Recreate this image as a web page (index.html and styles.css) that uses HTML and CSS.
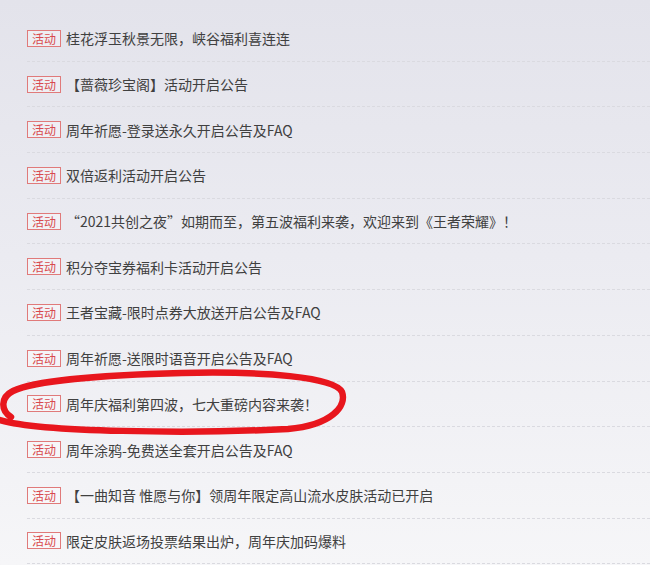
FILE: index.html
```html
<!DOCTYPE html>
<html lang="zh-CN">
<head>
<meta charset="utf-8">
<title>活动公告</title>
<link rel="stylesheet" href="styles.css">
</head>
<body>
<div class="page">
  <ul class="news">
    <li class="item"><span class="tag">活动</span><span class="title">桂花浮玉秋景无限，峡谷福利喜连连</span></li>
    <li class="item"><span class="tag">活动</span><span class="title">【蔷薇珍宝阁】活动开启公告</span></li>
    <li class="item"><span class="tag">活动</span><span class="title">周年祈愿-登录送永久开启公告及FAQ</span></li>
    <li class="item"><span class="tag">活动</span><span class="title">双倍返利活动开启公告</span></li>
    <li class="item"><span class="tag">活动</span><span class="title">“2021共创之夜”如期而至，第五波福利来袭，欢迎来到《王者荣耀》！</span></li>
    <li class="item"><span class="tag">活动</span><span class="title">积分夺宝券福利卡活动开启公告</span></li>
    <li class="item"><span class="tag">活动</span><span class="title">王者宝藏-限时点券大放送开启公告及FAQ</span></li>
    <li class="item"><span class="tag">活动</span><span class="title">周年祈愿-送限时语音开启公告及FAQ</span></li>
    <li class="item"><span class="tag">活动</span><span class="title">周年庆福利第四波，七大重磅内容来袭！</span></li>
    <li class="item"><span class="tag">活动</span><span class="title">周年涂鸦-免费送全套开启公告及FAQ</span></li>
    <li class="item"><span class="tag">活动</span><span class="title">【一曲知音 惟愿与你】领周年限定高山流水皮肤活动已开启</span></li>
    <li class="item"><span class="tag">活动</span><span class="title">限定皮肤返场投票结果出炉，周年庆加码爆料</span></li>
  </ul>
  <svg class="circle" width="360" height="70" viewBox="0 365 360 70" aria-hidden="true">
    <path d="M0 420 C 40 432, 190 434, 288 429 C 332 425, 347 406, 342 392 C 336 377, 262 371, 182 373 C 100 375, 34 381, 13 391 C 1 397, 0 410, 11 417" fill="none" stroke="#e8161d" stroke-width="6.5" stroke-linecap="round" stroke-linejoin="round"/>
  </svg>
</div>
</body>
</html>
```
FILE: styles.css
```css
html, body {
  margin: 0;
  padding: 0;
}
body {
  width: 650px;
  height: 565px;
  overflow: hidden;
  background: linear-gradient(180deg, #e3e3eb 0%, #ebebf1 45%, #f6f6f8 100%);
  font-family: "Noto Sans CJK SC", "Microsoft YaHei", sans-serif;
}
.page {
  position: relative;
  height: 565px;
}
.news {
  list-style: none;
  margin: 0;
  padding: 16px 0 0 27px;
}
.item {
  box-sizing: border-box;
  height: 45.7px;
  display: flex;
  align-items: center;
  border-bottom: 1px dashed #dadae0;
}
.tag {
  box-sizing: border-box;
  width: 34px;
  height: 17px;
  border: 1px solid #e07a7a;
  color: #d84a4d;
  font-size: 12px;
  line-height: 15px;
  text-align: center;
  margin-right: 5px;
  flex-shrink: 0;
  background: rgba(255, 255, 255, 0.35);
}
.title {
  color: #404040;
  font-size: 14px;
  line-height: 18px;
  white-space: nowrap;
}
.circle {
  position: absolute;
  left: 0;
  top: 365px;
}
```
